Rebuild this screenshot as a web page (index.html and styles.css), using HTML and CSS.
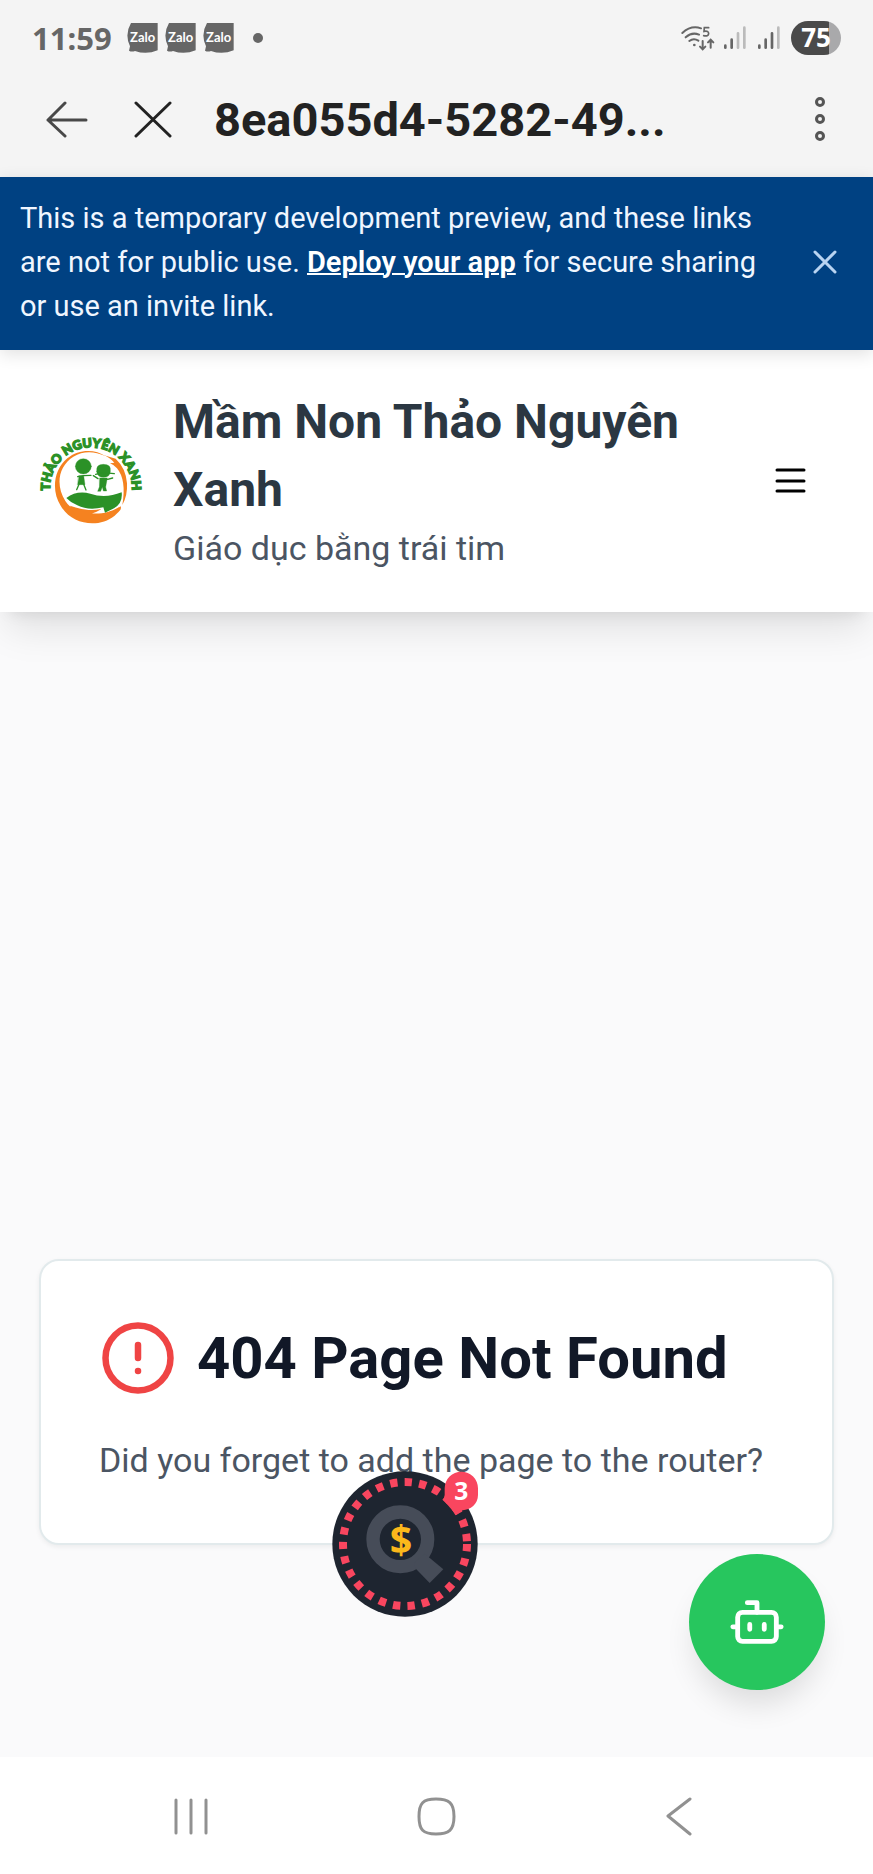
FILE: index.html
```html
<!DOCTYPE html>
<html lang="vi">
<head>
<meta charset="utf-8">
<meta name="viewport" content="width=device-width, initial-scale=1">
<title>Mầm Non Thảo Nguyên Xanh</title>
<link rel="stylesheet" href="styles.css">
</head>
<body>
<div class="screen">
  <div class="status-bar">
    <div class="status-left">
      <span class="clock">11:59</span>
      <div class="notifications">
        <svg width="31" height="30" viewBox="0 0 93 90"><path d="M12 0H92V82Q58 96 24 84Q14 88 6 83L9 70Q-8 34 12 0Z" fill="#666"/><text class="zalo" x="47" y="57" text-anchor="middle">Zalo</text></svg>
        <svg width="31" height="30" viewBox="0 0 93 90"><path d="M12 0H92V82Q58 96 24 84Q14 88 6 83L9 70Q-8 34 12 0Z" fill="#666"/><text class="zalo" x="47" y="57" text-anchor="middle">Zalo</text></svg>
        <svg width="31" height="30" viewBox="0 0 93 90"><path d="M12 0H92V82Q58 96 24 84Q14 88 6 83L9 70Q-8 34 12 0Z" fill="#666"/><text class="zalo" x="47" y="57" text-anchor="middle">Zalo</text></svg>
      </div>
      <span class="more-dot"></span>
    </div>
    <div class="status-right">
      <svg class="wifi" width="34" height="26" viewBox="0 0 102 78" fill="none" stroke="#666" stroke-width="6" stroke-linecap="round">
        <path d="M4 24Q30 0 60 10M14 37Q33 20 54 29M25 48Q38 38 52 47"/>
        <circle cx="40" cy="60" r="2" fill="#666" stroke-width="4"/>
        <path d="M83 8H70L69 19Q83 16 83 26Q82 35 68 32" stroke-width="5"/>
        <path d="M65 48V72M57 65L65 73L73 65M89 68V45M81 52L89 44L97 52" stroke-width="6"/>
      </svg>
      <svg width="24" height="26" viewBox="0 0 72 78" stroke-width="8" stroke-linecap="round">
        <path d="M7 62V68M26 44V68" stroke="#666"/><path d="M45 25V68M64 8V68" stroke="#bbb"/>
      </svg>
      <svg width="24" height="26" viewBox="0 0 72 78" stroke-width="8" stroke-linecap="round">
        <path d="M7 62V68M26 44V68M45 25V68" stroke="#666"/><path d="M64 8V68" stroke="#bbb"/>
      </svg>
      <span class="battery">75</span>
    </div>
  </div>

  <div class="app-bar">
    <button class="icon-button" aria-label="Back">
      <svg width="42" height="40" viewBox="0 0 42 40" fill="none" stroke="#484848" stroke-width="3" stroke-linecap="round" stroke-linejoin="round"><path d="M40 20H2M19 3L2 20L19 36"/></svg>
    </button>
    <button class="icon-button close-tab" aria-label="Close">
      <svg width="38" height="40" viewBox="0 0 38 40" fill="none" stroke="#222" stroke-width="3" stroke-linecap="round"><path d="M2 3L36 36M36 3L2 36"/></svg>
    </button>
    <div class="page-name">8ea055d4-5282-49...</div>
    <button class="icon-button" aria-label="More options">
      <svg width="10" height="46" viewBox="0 0 10 46" fill="none" stroke="#555" stroke-width="3"><circle cx="5" cy="5" r="3.5"/><circle cx="5" cy="22" r="3.5"/><circle cx="5" cy="39" r="3.5"/></svg>
    </button>
  </div>

  <div class="banner">
    <p class="banner-text">This is a temporary development preview, and these links are not for public use. <a href="#deploy">Deploy your app</a> for secure sharing or use an invite link.</p>
    <button class="icon-button" aria-label="Dismiss">
      <svg width="24" height="24" viewBox="0 0 24 24" fill="none" stroke="#b9d4f2" stroke-width="3" stroke-linecap="round"><path d="M2 2L22 22M22 2L2 22"/></svg>
    </button>
  </div>

  <div class="webview">
    <header class="site-header">
      <svg class="logo" width="104" height="104" viewBox="57 59 312 312" role="img" aria-label="Thảo Nguyên Xanh">
        <defs><path id="arc" d="M90 280V240A123 123 0 0 1 336 240V280"/></defs>
        <path d="M256 143C226 122 176 121 142 150C100 184 94 250 122 292C155 350 236 361 284 322C301 307 305 302 302 294C250 330 170 330 136 278C106 230 115 174 160 145C190 127 222 128 256 143Z" fill="#f58220"/>
        <path d="M150 292C192 306 215 308 244 302C236 308 220 315 214 315C245 319 280 308 298 296C275 338 215 353 175 328Q158 315 150 292Z" fill="#f58220"/>
        <path d="M250 140L287 151Q318 180 321 225Q323 262 307 290Q320 215 291 180Q283 170 270 165L283 163Q268 146 250 140Z" fill="#f58220"/>
        <path d="M139 269Q171 245 211 256Q255 272 305 252Q309 284 282 300L255 313L250 297Q205 308 172 291Q152 283 139 269Z" fill="#2b9127"/>
        <g fill="#2b9127" stroke="#2b9127" stroke-linecap="round">
          <ellipse cx="190" cy="174" rx="24" ry="23"/>
          <path d="M173 205L190 202L213 201" stroke-width="4" fill="none"/>
          <path d="M177 202H191L195 229H173Z"/>
          <path d="M177 228L170 244M191 228L198 245" stroke-width="4"/>
          <path d="M230 190Q227 168 250 168Q275 168 271 190Q269 207 250 207Q233 207 230 190Z"/>
          <path d="M227 198L249 193L283 196M234 211L220 202M263 213L278 209" stroke-width="4" fill="none"/>
          <path d="M239 209H262L257 236L260 248H250L247 236L242 249H233L238 236Z"/>
        </g>
        <text class="logo-text"><textPath href="#arc" startOffset="50%" text-anchor="middle">THẢO NGUYÊN XANH</textPath></text>
      </svg>
      <div class="brand">
        <h1 class="brand-name">Mầm Non Thảo Nguyên Xanh</h1>
        <p class="brand-tagline">Giáo dục bằng trái tim</p>
      </div>
      <button class="icon-button" aria-label="Menu">
        <svg width="32" height="26" viewBox="0 0 32 26" fill="none" stroke="#000" stroke-width="3" stroke-linecap="round"><path d="M3 3H30M3 14H30M3 24H30"/></svg>
      </button>
    </header>

    <main class="content">
      <section class="card">
        <div class="card-title">
          <svg width="78" height="78" viewBox="0 0 24 24" fill="none" stroke="#ef4444" stroke-width="2" stroke-linecap="round"><circle cx="12" cy="12" r="10"/><path d="M12 8v4M12 16h.01"/></svg>
          <h2>404 Page Not Found</h2>
        </div>
        <p class="card-text">Did you forget to add the page to the router?</p>
      </section>
    </main>

    <button class="coin" aria-label="Offers, 3 new">
      <svg width="146" height="146" viewBox="0 0 438 438">
        <circle cx="219" cy="219" r="218" fill="#1e2530"/>
        <circle cx="219" cy="219" r="186" fill="none" stroke="#f9465f" stroke-width="24" stroke-dasharray="22 21.7"/>
        <circle cx="205" cy="205" r="82" fill="none" stroke="#464c58" stroke-width="40"/>
        <path d="M246 276L278 248L334 295L293 336L250 292Z" fill="#464c58"/>
        <text class="coin-sign" x="207" y="248" text-anchor="middle">$</text>
        <path d="M388 2A50 50 0 0 1 438 52V72C438 100 415 116 392 118L373 132L334 87L338 72V52A50 50 0 0 1 388 2Z" fill="#f9465f"/>
        <text class="coin-count" x="388" y="87" text-anchor="middle">3</text>
      </svg>
    </button>

    <button class="chat" aria-label="Chat assistant">
      <svg width="58" height="58" viewBox="0 0 24 24" fill="none" stroke="#fff" stroke-width="2" stroke-linecap="round" stroke-linejoin="round"><path d="M12 8V4H8"/><rect x="4" y="8" width="16" height="12" rx="2"/><path d="M2 14h2M20 14h2M15 13v2M9 13v2"/></svg>
    </button>
  </div>

  <nav class="system-nav" aria-label="System">
    <button class="icon-button" aria-label="Recent apps"><svg width="38" height="40" viewBox="0 0 38 40" stroke="#919191" stroke-width="3" stroke-linecap="round"><path d="M4 4V37M19 4V37M34 4V37"/></svg></button>
    <button class="icon-button" aria-label="Home"><svg width="42" height="40" viewBox="0 0 42 40" fill="none" stroke="#919191" stroke-width="3"><path d="M19 3C32 3 37 7 37 20.500S32 38 19 38S2 34 2 20.500S6 3 19 3Z"/></svg></button>
    <button class="icon-button" aria-label="Back"><svg width="28" height="40" viewBox="0 0 28 40" fill="none" stroke="#919191" stroke-width="3" stroke-linecap="round" stroke-linejoin="round"><path d="M25 3L3 20L25 38"/></svg></button>
  </nav>
</div>
</body>
</html>
```
FILE: styles.css
```css
* {
  box-sizing: border-box;
}

body,
h1,
h2,
p {
  margin: 0;
}

body {
  font-family: Roboto, "Noto Sans", sans-serif;
  background: #fafafb;
}

button {
  padding: 0;
  border: 0;
  background: none;
  font: inherit;
  cursor: pointer;
}

svg {
  display: block;
  flex: none;
}

.icon-button {
  flex: none;
}

.screen {
  display: flex;
  flex-direction: column;
  min-height: 100vh;
}

/* Phone status bar */
.status-bar {
  display: flex;
  justify-content: space-between;
  align-items: center;
  height: 76px;
  padding: 0 32px;
  background: #f4f4f4;
  color: #666;
}

.status-left,
.status-right,
.notifications {
  display: flex;
  align-items: center;
}

.status-left {
  gap: 15px;
}

.status-right {
  gap: 10px;
}

.wifi {
  margin-right: -2px;
}

.clock {
  font: 700 31px/40px "Noto Sans", sans-serif;
}

.notifications {
  gap: 7px;
}

.zalo {
  fill: #fff;
  font: 700 39px Lato, sans-serif;
}

.more-dot {
  width: 10px;
  height: 10px;
  margin-left: 4px;
  border-radius: 50%;
  background: #666;
}

.battery {
  width: 50px;
  height: 34px;
  border-radius: 17px;
  background: linear-gradient(90deg, #4a4a4a 76%, #a9a9ab 76%);
  color: #fff;
  font: 700 26px/33px "Noto Sans", sans-serif;
  text-align: center;
}

/* In-app browser bar */
.app-bar {
  display: flex;
  align-items: center;
  height: 101px;
  padding: 0 48px 14px 46px;
  background: #f4f4f4;
}

.close-tab {
  margin: 0 42px 0 46px;
}

.page-name {
  flex: 1;
  color: #222;
  font-size: 47px;
  font-weight: 700;
  line-height: 60px;
}

/* Preview banner */
.banner {
  position: relative;
  z-index: 2;
  display: flex;
  justify-content: space-between;
  align-items: center;
  padding: 19px 36px 22px 20px;
  background: #004182;
  box-shadow: 0 4px 16px rgb(0 0 0 / 12%);
}

.banner-text {
  max-width: 760px;
  color: #f0f6ff;
  font-size: 29px;
  line-height: 44px;
}

.banner-text a {
  color: #fff;
  font-weight: 600;
  text-decoration-thickness: 2px;
}

/* Web page */
.webview {
  position: relative;
  display: flex;
  flex: 1;
  flex-direction: column;
}

.site-header {
  display: flex;
  align-items: center;
  padding: 38px 67px 40px 39px;
  background: #fff;
  box-shadow: 0 24px 36px -7px rgb(0 0 0 / 10%), 0 10px 15px -10px rgb(0 0 0 / 10%);
}

.logo {
  overflow: visible;
}

.logo-text {
  fill: #2b9127;
  stroke: #2b9127;
  stroke-width: 4;
  font: 900 38px Lato, "Noto Sans", sans-serif;
}

.brand {
  flex: 1;
  padding: 0 30px;
}

.brand-name {
  color: #2b3742;
  font-size: 48px;
  font-weight: 700;
  line-height: 68px;
}

.brand-tagline {
  color: #4b5563;
  font-size: 34px;
  line-height: 48px;
}

.content {
  display: flex;
  flex: 1;
  flex-direction: column;
  justify-content: flex-end;
  padding: 0 39px 212px;
}

.card {
  padding: 58px 58px 59px;
  border: 2px solid #e2eaec;
  border-radius: 20px;
  background: #fff;
  box-shadow: 0 2px 5px rgb(0 0 0 / 6%);
}

.card-title {
  display: flex;
  align-items: center;
  gap: 20px;
  color: #111827;
}

.card-title h2 {
  font-size: 58px;
  font-weight: 700;
  line-height: 78px;
}

.card-text {
  margin-top: 39px;
  color: #4b5563;
  font-size: 34px;
  line-height: 48px;
}

/* Floating buttons */
.coin {
  position: absolute;
  bottom: 140px;
  left: 332px;
}

.coin-sign {
  fill: #fbb81b;
  font: 700 118px "Noto Sans", sans-serif;
}

.coin-count {
  fill: #fff;
  font: 700 74px "Noto Sans", sans-serif;
}

.chat {
  position: absolute;
  right: 48px;
  bottom: 67px;
  display: grid;
  place-items: center;
  width: 136px;
  height: 136px;
  border-radius: 50%;
  background: #27c65e;
  box-shadow: 0 20px 30px -6px rgb(0 0 0 / 12%);
}

/* System navigation */
.system-nav {
  display: flex;
  justify-content: space-between;
  align-items: center;
  height: 117px;
  padding: 0 180px 0 172px;
  background: #fff;
}
```
